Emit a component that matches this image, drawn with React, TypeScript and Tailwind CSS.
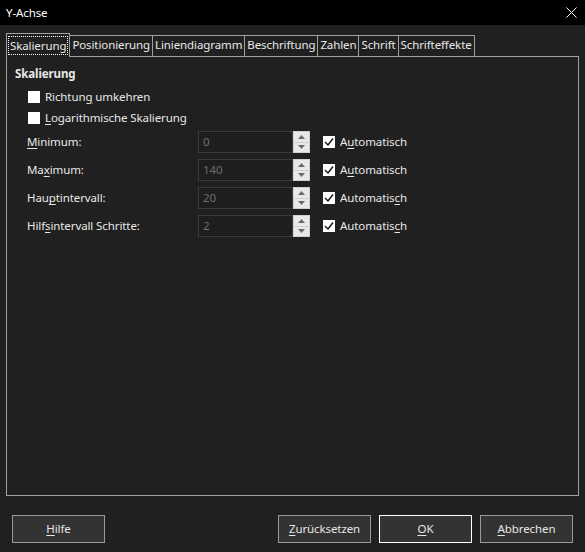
import React from "react";

const font = { fontFamily: '"Noto Sans", "Open Sans", Arial, sans-serif' };

const U = ({ children }: { children: React.ReactNode }) => (
  <span className="underline underline-offset-2">{children}</span>
);

const tabs = [
  "Skalierung",
  "Positionierung",
  "Liniendiagramm",
  "Beschriftung",
  "Zahlen",
  "Schrift",
  "Schrifteffekte",
];

const CheckBox = ({ checked }: { checked?: boolean }) => (
  <div className="w-[12px] h-[12px] bg-white flex items-center justify-center shrink-0">
    {checked && (
      <svg width="10" height="10" viewBox="0 0 10 10">
        <path d="M1 5 L4 8 L9 1.5" stroke="#111" strokeWidth="1.4" fill="none" />
      </svg>
    )}
  </div>
);

const Spin = ({ value }: { value: string }) => (
  <div className="flex h-[22px]">
    <div className="w-[95px] h-full border border-[#3a3a3a] bg-[#1e1e1e] text-[#6e6e6e] pl-[4px] flex items-center">
      {value}
    </div>
    <div className="w-[17px] h-full border border-[#cfcfcf] bg-[#e8e8e8] flex flex-col">
      <div className="flex-1 flex items-center justify-center border-b border-[#cfcfcf]">
        <svg width="7" height="4" viewBox="0 0 7 4">
          <path d="M0 4 L3.5 0 L7 4 Z" fill="#6a6a6a" />
        </svg>
      </div>
      <div className="flex-1 flex items-center justify-center">
        <svg width="7" height="4" viewBox="0 0 7 4">
          <path d="M0 0 L3.5 4 L7 0 Z" fill="#6a6a6a" />
        </svg>
      </div>
    </div>
  </div>
);

const rows: { label: React.ReactNode; value: string; auto: React.ReactNode }[] = [
  { label: <><U>M</U>inimum:</>, value: "0", auto: <>A<U>u</U>tomatisch</> },
  { label: <>Ma<U>x</U>imum:</>, value: "140", auto: <>A<U>u</U>tomatisch</> },
  { label: <>Hau<U>p</U>tintervall:</>, value: "20", auto: <>Automatis<U>c</U>h</> },
  { label: <>Hilf<U>s</U>intervall Schritte:</>, value: "2", auto: <>Automatis<U>c</U>h</> },
];

const Button = ({ children, def }: { children: React.ReactNode; def?: boolean }) => (
  <button
    className={`w-[93px] h-[28px] bg-[#333333] text-[#e6e6e6] border ${
      def ? "border-white" : "border-[#9a9a9a]"
    }`}
  >
    {children}
  </button>
);

export default function App() {
  return (
    <div
      className="w-[585px] h-[552px] bg-[#202020] text-[#e8e8e8] text-[11.5px] tracking-[-0.1px] flex flex-col"
      style={font}
    >
      {/* Title bar */}
      <div className="h-[25px] bg-black flex items-center justify-between pl-[6px] pr-[8px] shrink-0">
        <span className="text-white">Y-Achse</span>
        <svg width="11" height="11" viewBox="0 0 11 11">
          <path d="M0.5 0.5 L10.5 10.5 M10.5 0.5 L0.5 10.5" stroke="#fff" strokeWidth="1" />
        </svg>
      </div>

      {/* Tabs */}
      <div className="px-[6px] pt-[8px] flex flex-col">
        <div className="flex items-end h-[23px]">
          {tabs.map((t, i) =>
            i === 0 ? (
              <div
                key={t}
                className="border-l border-t border-r border-[#a0a0a0] bg-[#202020] relative z-10 px-[1px] pt-[2px] mb-[-1px] h-[24px]"
              >
                <div className="border border-dotted border-white px-[1px] leading-[17px]">{t}</div>
              </div>
            ) : (
              <div
                key={t}
                className="h-[21px] border-t border-r border-[#a0a0a0] px-[2px] leading-[18px]"
              >
                {t}
              </div>
            )
          )}
        </div>

        {/* Panel */}
        <div className="h-[440px] border border-[#a0a0a0] pl-[8px] pt-[9px]">
          <div className="font-bold leading-[16px]">Skalierung</div>
          <div className="mt-[4px] pl-[13px]">
            <div className="h-[21px] flex items-center gap-[5px]">
              <CheckBox />
              <span>
                Richtun<U>g</U> umkehren
              </span>
            </div>
            <div className="h-[21px] flex items-center gap-[5px]">
              <CheckBox />
              <span>
                <U>L</U>ogarithmische Skalierung
              </span>
            </div>
          </div>
          <div className="pl-[12px]">
            {rows.map((r, i) => (
              <div key={i} className="h-[28px] flex items-center">
                <div className="w-[171px]">{r.label}</div>
                <Spin value={r.value} />
                <div className="ml-[13px] flex items-center gap-[5px]">
                  <CheckBox checked />
                  <span>{r.auto}</span>
                </div>
              </div>
            ))}
          </div>
        </div>
      </div>

      {/* Buttons */}
      <div className="mt-[19px] px-[12px] flex items-center">
        <Button>
          <U>H</U>ilfe
        </Button>
        <div className="flex-1" />
        <div className="flex gap-[8px]">
          <Button>
            <U>Z</U>urücksetzen
          </Button>
          <Button def>
            <U>O</U>K
          </Button>
          <Button>
            <U>A</U>bbrechen
          </Button>
        </div>
      </div>
    </div>
  );
}
